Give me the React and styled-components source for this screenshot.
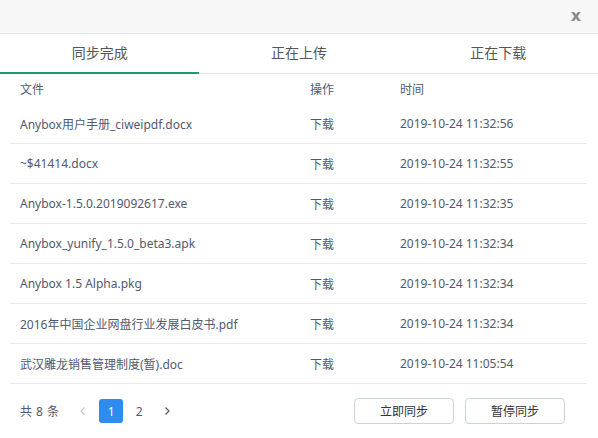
import React from "react";
import styled, { createGlobalStyle } from "styled-components";

const GlobalStyle = createGlobalStyle`
  html, body {
    margin: 0;
    padding: 0;
    background: #fff;
  }
  body {
    font-family: "Noto Sans", "Noto Sans CJK SC", sans-serif;
    color: #515a6e;
  }
`

const Dialog = styled.div`
  width: 598px;
  height: 438px;
  display: flex;
  flex-direction: column;
  background: #fff;
  overflow: hidden;
`

const TitleBar = styled.div`
  height: 33px;
  background: #f7f7f7;
  border-bottom: 1px solid #e3e6e8;
  display: flex;
  align-items: center;
  justify-content: flex-end;
  padding-right: 17px;
  flex-shrink: 0;
`

const Close = styled.span`
  font-family: "DejaVu Sans", sans-serif;
  font-size: 16px;
  font-weight: bold;
  color: #8a8a8a;
  line-height: 1;
  margin-top: -1px;
`

const Tabs = styled.div`
  display: flex;
  height: 39px;
  border-bottom: 1px solid #e2e2e2;
  flex-shrink: 0;
`

const Tab = styled.div`
  flex: 1;
  display: flex;
  align-items: center;
  justify-content: center;
  font-size: 14px;
  color: #555;
  margin-bottom: -1px;
  padding-bottom: 2px;
  border-bottom: 2px solid ${(props) => (props.$active ? "#1a9b6f" : "transparent")};
`

const Table = styled.div`
  margin: 0 10px;
  width: 577px;
`

const Row = styled.div`
  display: grid;
  grid-template-columns: 290px 90px 1fr;
  align-items: center;
  height: ${(props) => (props.$head ? "30px" : "39px")};
  padding-left: 10px;
  font-size: 12px;
  color: #515a6e;
  border-bottom: ${(props) => (props.$head ? "none" : "1px solid #e8eaec")};
`

const Footer = styled.div`
  display: flex;
  align-items: center;
  height: 54px;
  padding: 0 33px 0 20px;
`

const Total = styled.span`
  font-size: 12px;
  color: #515a6e;
  word-spacing: 1px;
  margin-right: 12px;
`

const Pager = styled.div`
  display: flex;
  align-items: center;
  gap: 4px;
  flex: 1;
`

const PageItem = styled.span`
  width: 24px;
  height: 24px;
  display: flex;
  align-items: center;
  justify-content: center;
  border-radius: 3px;
  font-size: 12px;
  background: ${(props) => (props.$active ? "#2d8cf0" : "transparent")};
  color: ${(props) => (props.$active ? "#fff" : props.$disabled ? "#c5c8ce" : "#515a6e")};
`

const Button = styled.button`
  width: 100px;
  height: 26px;
  border: 1px solid #c8d2df;
  border-radius: 4px;
  background: #fff;
  font-family: "Noto Sans", "Noto Sans CJK SC", sans-serif;
  font-size: 12px;
  color: #333;
  padding: 0;
  margin-left: 11px;
`

const Chevron = ({ dir }) => (
  <svg width="10" height="10" viewBox="0 0 10 10">
    <path
      d={dir === "left" ? "M6.5 1.5 L3 5 L6.5 8.5" : "M3.5 1.5 L7 5 L3.5 8.5"}
      fill="none"
      stroke="currentColor"
      strokeWidth="1.2"
    />
  </svg>
)

const files = [
  ["Anybox用户手册_ciweipdf.docx", "2019-10-24 11:32:56"],
  ["~$41414.docx", "2019-10-24 11:32:55"],
  ["Anybox-1.5.0.2019092617.exe", "2019-10-24 11:32:35"],
  ["Anybox_yunify_1.5.0_beta3.apk", "2019-10-24 11:32:34"],
  ["Anybox 1.5 Alpha.pkg", "2019-10-24 11:32:34"],
  ["2016年中国企业网盘行业发展白皮书.pdf", "2019-10-24 11:32:34"],
  ["武汉雕龙销售管理制度(暂).doc", "2019-10-24 11:05:54"],
]

export default function App() {
  return (
    <>
      <GlobalStyle />
      <Dialog>
        <TitleBar>
          <Close>x</Close>
        </TitleBar>
        <Tabs>
          <Tab $active>同步完成</Tab>
          <Tab>正在上传</Tab>
          <Tab>正在下载</Tab>
        </Tabs>
        <Table>
          <Row $head>
            <span>文件</span>
            <span>操作</span>
            <span>时间</span>
          </Row>
          {files.map(([name, time]) => (
            <Row key={name}>
              <span>{name}</span>
              <span>下载</span>
              <span>{time}</span>
            </Row>
          ))}
        </Table>
        <Footer>
          <Total>共 8 条</Total>
          <Pager>
            <PageItem $disabled><Chevron dir="left" /></PageItem>
            <PageItem $active>1</PageItem>
            <PageItem>2</PageItem>
            <PageItem><Chevron dir="right" /></PageItem>
          </Pager>
          <Button>立即同步</Button>
          <Button>暂停同步</Button>
        </Footer>
      </Dialog>
    </>
  )
}
